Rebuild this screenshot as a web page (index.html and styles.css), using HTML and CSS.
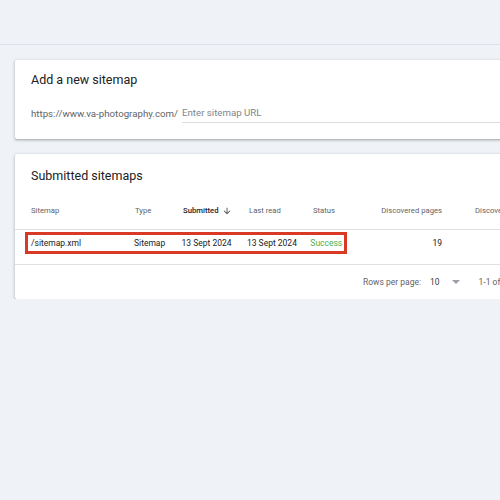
FILE: index.html
```html
<!DOCTYPE html>
<html>
<head>
  <link rel="stylesheet" href="styles.css">
</head>
<body>
  <div class="topbar"></div>

  <div class="page">
    <div class="card add-card">
      <h2>Add a new sitemap</h2>
      <div class="url-row">
        <span class="domain">https://www.va-photography.com/</span>
        <span class="url-input">Enter sitemap URL</span>
      </div>
    </div>

    <div class="card list-card">
      <h2>Submitted sitemaps</h2>
      <div class="table">
        <div class="row head">
          <div class="group">
            <div class="c-sitemap">Sitemap</div>
            <div class="c-type">Type</div>
            <div class="c-sub sorted">Submitted
              <svg class="arrow" viewBox="0 0 24 24" width="10" height="10"><path d="M20 12l-1.41-1.41L13 16.17V4h-2v12.17l-5.58-5.59L4 12l8 8 8-8z"/></svg>
            </div>
            <div class="c-read">Last read</div>
            <div class="c-status">Status</div>
          </div>
          <div class="c-pages">Discovered pages</div>
          <div class="c-videos">Discovered videos</div>
        </div>
        <div class="row body">
          <div class="group highlight">
            <div class="c-sitemap">/sitemap.xml</div>
            <div class="c-type">Sitemap</div>
            <div class="c-sub">13 Sept 2024</div>
            <div class="c-read">13 Sept 2024</div>
            <div class="c-status ok">Success</div>
          </div>
          <div class="c-pages">19</div>
          <div class="c-videos">0</div>
        </div>
        <div class="pager">
          <span class="pager-label">Rows per page:</span>
          <span class="pager-size">10</span>
          <span class="caret"></span>
          <span class="pager-range">1-1 of 1</span>
        </div>
      </div>
    </div>
  </div>
</body>
</html>
```

FILE: styles.css
```css
body {
  font-family: Roboto, 'Liberation Sans', sans-serif;
  margin: 0;
  background-color: #eff2f7;
  color: #3c4043;
  overflow: hidden;
}
.topbar {
  height: 44px;
  border-bottom: 1px solid #dde1e8;
}
.page {
  display: flex;
  flex-direction: column;
  gap: 15px;
  padding: 15px 0 0 15px;
}
.card {
  width: 700px;
  background-color: #fff;
  border-radius: 2px;
  box-shadow: 0 1px 2px rgba(60, 64, 67, 0.3), 0 1px 3px 1px rgba(60, 64, 67, 0.12);
}
.card h2 {
  margin: 0;
  padding: 10px 16px 0 16px;
  font-size: 12.5px;
  font-weight: 400;
  line-height: 20px;
  color: #202124;
}
.add-card {
  height: 79px;
}
.url-row {
  display: flex;
  align-items: flex-end;
  margin: 17px 0 0 16px;
  font-size: 9.7px;
}
.domain {
  color: #5f6368;
  padding-bottom: 4px;
}
.url-input {
  flex: 1;
  margin-left: 4px;
  padding-bottom: 4px;
  color: #80868b;
  border-bottom: 1px solid #dadce0;
}
.list-card {
  height: 145px;
}
.list-card h2 {
  padding-top: 12px;
}
.table {
  margin-top: 6px;
}
.row {
  display: flex;
  align-items: center;
  padding-left: 16px;
  white-space: nowrap;
  border-bottom: 1px solid #e0e0e0;
}
.row.head {
  height: 37px;
  font-size: 7.7px;
  color: #5f6368;
}
.row.body {
  align-items: flex-start;
  box-sizing: border-box;
  height: 35px;
  padding-top: 2px;
  font-size: 8.5px;
  color: #202124;
}
.group {
  display: flex;
  align-items: center;
  width: 316px;
}
.highlight {
  margin-left: -6px;
  padding-left: 3px;
  width: 313px;
  height: 16px;
  border: 3px solid #d93a25;
}
.row.body .c-pages {
  line-height: 22px;
}
.c-sitemap { width: 104px; }
.c-type { width: 48px; }
.c-sub {
  display: flex;
  align-items: center;
  width: 66px;
}
.c-read { width: 64px; }
.c-status { width: 34px; }
.c-pages {
  width: 95px;
  text-align: right;
}
.c-videos {
  width: 90px;
  margin-left: 33px;
}
.row.body .c-videos {
  text-align: right;
  line-height: 22px;
}
.sorted {
  color: #202124;
  font-weight: 500;
}
.arrow {
  margin-left: 4px;
  fill: #3c4043;
}
.ok {
  color: #4caf50;
}
.pager {
  display: flex;
  align-items: center;
  height: 34px;
  padding-left: 348px;
  font-size: 8.5px;
  color: #5f6368;
}
.pager-size {
  margin-left: 9px;
  color: #3c4043;
}
.caret {
  margin-left: 12px;
  border-left: 4px solid transparent;
  border-right: 4px solid transparent;
  border-top: 4px solid #9aa0a6;
}
.pager-range {
  margin-left: 19px;
}
```
